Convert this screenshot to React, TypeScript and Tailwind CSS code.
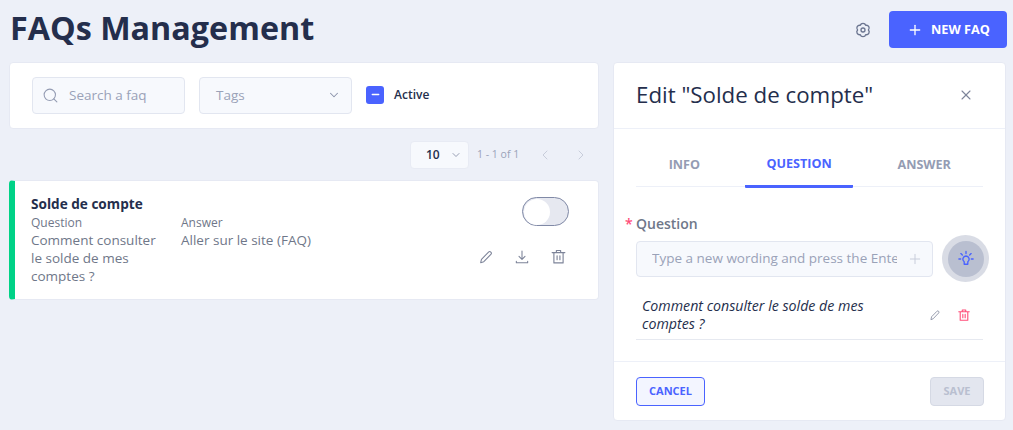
import { ChevronDown, ChevronLeft, ChevronRight, Minus, Plus, Search, X } from "lucide-react";

type IconProps = { size: number; className?: string; strokeWidth?: number };

const Svg = ({ size, className, strokeWidth = 1.6, d }: IconProps & { d: string }) => (
  <svg width={size} height={size} viewBox="0 0 24 24" fill="none" stroke="currentColor" strokeWidth={strokeWidth} strokeLinecap="round" strokeLinejoin="round" className={className}>
    <path d={d} />
  </svg>
);

const GearIcon = (p: IconProps) => (
  <Svg {...p} d="M15.25 6.37A3.4 3.4 0 0 1 18.5 12A3.4 3.4 0 0 1 15.25 17.63A3.4 3.4 0 0 1 8.75 17.63A3.4 3.4 0 0 1 5.5 12A3.4 3.4 0 0 1 8.75 6.37A3.4 3.4 0 0 1 15.25 6.37ZM12 9.6a2.4 2.4 0 1 0 0 4.8a2.4 2.4 0 0 0 0-4.8Z" />
);
const PencilIcon = (p: IconProps) => (
  <Svg {...p} d="M4 20.5l1.2-5L15.8 4.6a2.4 2.4 0 0 1 3.5 3.4L8.7 19.1Z" />
);
const TrayIcon = (p: IconProps) => (
  <Svg {...p} d="M12 3v12.5M7.5 11l4.5 4.5 4.5-4.5M3.5 18.5v2h17v-2" />
);
const TrashIcon = (p: IconProps) => (
  <Svg {...p} d="M3 6.5h18M9 6.5V3.5h6v3M5.5 6.5V21h13V6.5M10 11v5.5M14 11v5.5" />
);
const BulbIcon = (p: IconProps) => (
  <Svg {...p} d="M12 8a4.2 4.2 0 0 0-2.4 7.6V19h4.8v-3.4A4.2 4.2 0 0 0 12 8ZM12 2v2.6M5.2 4.8l1.9 1.9M18.8 4.8l-1.9 1.9M2.5 12h2.4M19.1 12h2.4" />
);

const Header = () => (
  <div className="flex items-center justify-between h-[62px] pl-[10px] pr-[6px]">
    <h1 className="text-[32.3px] leading-[54px] font-bold text-[#242e4c] -mt-[9px]">FAQs Management</h1>
    <div className="flex items-center -mt-[3px]">
      <GearIcon size={20} className="text-[#6b7590] mr-[16px]" />
      <button className="flex items-center h-[37px] w-[118px] rounded-[4px] bg-[#4a63ff] text-white text-[12.7px] font-bold pl-[18px]">
        <Plus size={16} strokeWidth={2} className="mr-[8px]" />
        NEW FAQ
      </button>
    </div>
  </div>
);

const Filters = () => (
  <div className="flex items-center h-[67px] pb-[1px] bg-white rounded-[4px] border border-[#e6e9f3] pl-[22px]">
    <div className="flex items-center w-[153px] h-[37px] rounded-[4px] border border-[#e2e6f0] bg-[#f7f9fd] pl-[9px]">
      <Search size={17} strokeWidth={1.5} className="shrink-0 text-[#949cb3]" />
      <input placeholder="Search a faq" className="ml-[10px] w-[110px] outline-none text-[13.5px] placeholder:text-[#9aa2b8]" />
    </div>
    <div className="flex items-center justify-between w-[153px] h-[37px] ml-[14px] rounded-[4px] border border-[#e2e6f0] bg-[#f7f9fd] pl-[16px] pr-[10px]">
      <span className="text-[13.5px] text-[#9aa2b8]">Tags</span>
      <ChevronDown size={14} strokeWidth={1.8} className="text-[#8b93aa]" />
    </div>
    <div className="flex items-center justify-center w-[18px] h-[18px] ml-[14px] -mt-[1px] rounded-[3px] bg-[#4a63ff]">
      <Minus size={11} strokeWidth={3} className="text-white" />
    </div>
    <span className="ml-[10px] -mt-[1px] text-[12px] font-semibold text-[#242e4c]">Active</span>
  </div>
);

const Pagination = () => (
  <div className="flex items-center h-[28px] mt-[12px] mb-[11px] pl-[401px]">
    <div className="flex items-center w-[59px] h-[28px] rounded-[4px] bg-[#f7f9fd] border border-[#e8ebf4] pl-[15px]">
      <span className="text-[12px] font-semibold text-[#242e4c]">10</span>
      <ChevronDown size={12} strokeWidth={1.8} className="ml-[10px] text-[#8b93aa]" />
    </div>
    <span className="ml-[8px] text-[10.5px] text-[#9aa2b8]">1 - 1 of 1</span>
    <ChevronLeft size={16} strokeWidth={1.5} className="ml-[18px] text-[#c8cddb]" />
    <ChevronRight size={16} strokeWidth={1.5} className="ml-[20px] text-[#c8cddb]" />
  </div>
);

const FaqCard = () => (
  <div className="flex justify-between h-[120px] bg-white rounded-[4px] border border-[#e6e9f3] border-l-[6px] border-l-[#00d287] pl-[16px] pr-[29px] pt-[13px]">
    <div>
      <div className="text-[13.6px] leading-[20px] font-bold text-[#242e4c]">Solde de compte</div>
      <div className="flex">
        <div className="w-[150px] text-[#6f7789]">
          <div className="text-[12px] leading-[17px]">Question</div>
          <div className="w-[130px] text-[13.5px] leading-[18px]">Comment consulter le solde de mes comptes ?</div>
        </div>
        <div className="text-[#6f7789]">
          <div className="text-[12px] leading-[17px]">Answer</div>
          <div className="text-[13.5px] leading-[18px]">Aller sur le site (FAQ)</div>
        </div>
      </div>
    </div>
    <div className="flex flex-col items-end">
      <div className="flex items-center w-[47px] h-[29px] mt-[3px] rounded-full border border-[#8089a6] bg-[#e6e8f0] p-[1px]">
        <div className="w-[26px] h-[26px] rounded-full bg-white" />
      </div>
      <div className="flex items-center mt-[22px] mr-[2px] gap-[20px] text-[#7d8499]">
        <PencilIcon size={16} />
        <TrayIcon size={16} />
        <TrashIcon size={17} />
      </div>
    </div>
  </div>
);

const EditPanel = () => (
  <div className="flex flex-col h-[359px] w-[393px] bg-white rounded-[4px] border border-[#e6e9f3]">
    <div className="flex items-center justify-between h-[66px] pl-[22px] pr-[31px] border-b border-[#edf0f8]">
      <span className="-mt-[1px] text-[22.3px] font-medium text-[#242e4c]">Edit "Solde de compte"</span>
      <X size={16} strokeWidth={1.6} className="-mt-[1px] text-[#7d8499]" />
    </div>
    <div className="flex h-[58px] mx-[22px] border-b border-[#edf0f8] text-[12.6px] font-bold">
      <div className="flex items-center justify-center w-[109px] pt-[15px] pr-[12px] text-[#949cb3]">INFO</div>
      <div className="flex items-center justify-center w-[109px] h-[59px] pt-[15px] text-[#4a63ff] border-b-[3px] border-[#4a63ff] rounded-[1px]">QUESTION</div>
      <div className="flex items-center justify-center w-[130px] pt-[15px] pl-[12px] text-[#949cb3]">ANSWER</div>
    </div>
    <div className="flex-1 px-[22px] pt-[28px]">
      <div className="relative text-[14px] leading-[18px] font-semibold text-[#6f7789]">
        <span className="absolute -left-[11px] text-[#ff4d79]">*</span>
        Question
      </div>
      <div className="flex items-center mt-[2px]">
        <div className="flex items-center justify-between shrink-0 w-[297px] h-[36px] rounded-[4px] border border-[#e2e6f0] bg-[#f7f9fd] pl-[15px] pr-[9px]">
          <input placeholder="Type a new wording and press the Enter key" className="w-[245px] outline-none text-[13.5px] placeholder:text-[#9aa2b8]" />
          <Plus size={16} strokeWidth={1.5} className="shrink-0 text-[#c8cddb]" />
        </div>
        <div className="flex items-center justify-center shrink-0 w-[47px] h-[47px] ml-[9px] rounded-full bg-[#d9dce5]">
          <div className="flex items-center justify-center w-[36px] h-[36px] rounded-full bg-[#b9bfd0]">
            <BulbIcon size={18} strokeWidth={1.8} className="text-[#4a63ff]" />
          </div>
        </div>
      </div>
      <div className="flex items-center justify-between h-[58px] pt-[9px] pl-[6px] pr-[12px] border-b border-[#e6e9f0]">
        <span className="w-[250px] text-[14.2px] leading-[18px] italic text-[#242e4c]">Comment consulter le solde de mes comptes ?</span>
        <div className="flex items-center gap-[16px]">
          <PencilIcon size={12} className="text-[#7d8499]" />
          <TrashIcon size={14} strokeWidth={1.9} className="text-[#ff4d79]" />
        </div>
      </div>
    </div>
    <div className="flex items-center justify-between h-[59px] pl-[22px] pr-[21px] border-t border-[#edf0f8]">
      <button className="w-[69px] h-[29px] rounded-[4px] border border-[#4a63ff] bg-[#f3f5ff] text-[11px] font-bold text-[#4a63ff]">CANCEL</button>
      <button className="w-[54px] h-[29px] rounded-[4px] border border-[#d5d9e4] bg-[#e3e6ef] text-[11px] font-bold text-[#b9bfd0]">SAVE</button>
    </div>
  </div>
);

export default function App() {
  return (
    <div className="w-[1013px] h-[430px] overflow-hidden bg-[#edf0f8] font-['Open_Sans',sans-serif]">
      <Header />
      <div className="flex items-start pl-[9px]">
        <div className="w-[590px]">
          <Filters />
          <Pagination />
          <FaqCard />
        </div>
        <div className="ml-[14px]">
          <EditPanel />
        </div>
      </div>
    </div>
  );
}
